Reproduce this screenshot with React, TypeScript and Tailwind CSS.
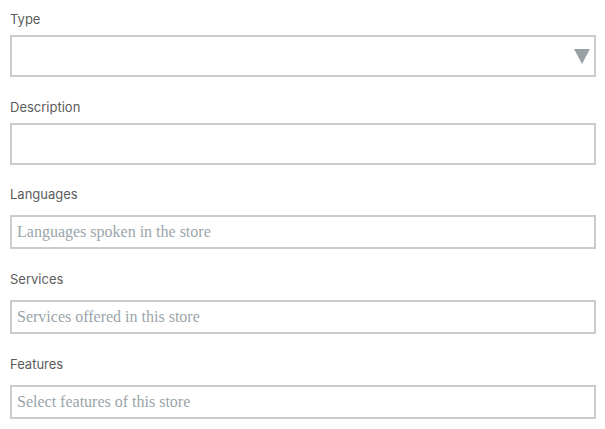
const labelClass =
  "block text-[13px] leading-[16px] text-[#5c5c5c] font-['Inter',sans-serif]"

const TextField = ({
  label,
  placeholder,
  spacing,
}: {
  label: string
  placeholder: string
  spacing: string
}) => {
  return (
    <div className={spacing}>
      <label className={labelClass}>{label}</label>
      <input
        type="text"
        placeholder={placeholder}
        className="mt-[13px] block h-[34px] w-full border-2 border-[#ccc] bg-white px-[5px] text-[16px] text-[#333] font-['Liberation_Serif',serif] placeholder:text-[#9aa5ab] outline-none"
      />
    </div>
  )
}

const App = () => {
  return (
    <div className="min-h-screen w-[605px] bg-white pl-[10px] pr-[9px] pt-[11px]">
      {/* Type select */}
      <div>
        <label className={labelClass}>Type</label>
        <div className="mt-[8px] flex h-[42px] items-center justify-end border-2 border-[#ccc] bg-white pr-[4px]">
          <svg width="16" height="15" viewBox="0 0 16 15">
            <polygon points="0,0 16,0 8,15" fill="#9aa1a5" />
          </svg>
        </div>
      </div>

      {/* Description */}
      <div className="mt-[22px]">
        <label className={labelClass}>Description</label>
        <input
          type="text"
          className="mt-[8px] block h-[42px] w-full border-2 border-[#ccc] bg-white px-[5px] outline-none"
        />
      </div>

      <TextField spacing="mt-[21px]" label="Languages" placeholder="Languages spoken in the store" />
      <TextField spacing="mt-[22px]" label="Services" placeholder="Services offered in this store" />
      <TextField spacing="mt-[22px]" label="Features" placeholder="Select features of this store" />
    </div>
  )
}

export default App
